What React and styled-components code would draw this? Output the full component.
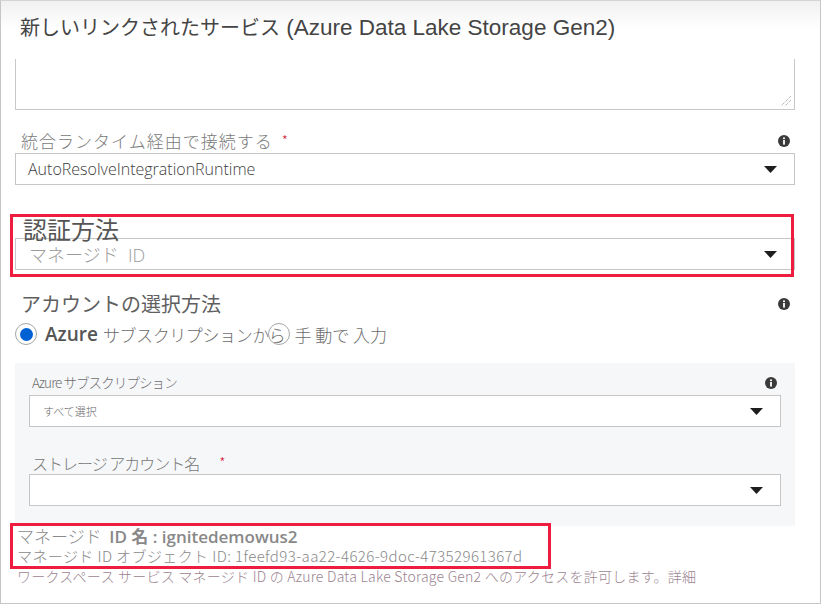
import React from "react";
import styled, { createGlobalStyle } from "styled-components";

const GlobalStyle = createGlobalStyle`
  html, body {
    margin: 0;
    padding: 0;
    background: #fff;
  }
  body {
    font-family: "Segoe UI", "Open Sans", "Noto Sans CJK JP", sans-serif;
  }
`;

const jp = `"Noto Sans CJK JP", "Open Sans", sans-serif`;

const Frame = styled.div`
  position: relative;
  box-sizing: border-box;
  width: 821px;
  height: 604px;
  border: 1px solid #c6c6c6;
  border-top-color: #d4d4d4;
  background: linear-gradient(#f1f1f1, #ffffff 28px);
  overflow: hidden;
`;

const Content = styled.div`
  padding: 0 25px 0 14px;
`;

const Title = styled.h1`
  margin: 0;
  padding: 6px 0 0 5px;
  height: 58px;
  box-sizing: border-box;
  font-weight: 400;
  line-height: 32px;
  color: #444;
  white-space: nowrap;
`;

const TitleJp = styled.span`
  font-family: ${jp};
  font-size: 20px;
`;

const TitleEn = styled.span`
  font-family: "Liberation Sans", Arial, sans-serif;
  font-size: 22.5px;
`;

const TextArea = styled.div`
  position: relative;
  box-sizing: border-box;
  height: 51px;
  border: 1px solid #c8c8c8;
  border-top: none;
  background: #fff;
`;

const Grip = styled.svg`
  position: absolute;
  right: 2px;
  bottom: 2px;
`;

const LabelRow = styled.div`
  display: flex;
  align-items: center;
  justify-content: space-between;
  height: ${(p) => p.h || 26}px;
  margin-top: ${(p) => p.mt || 0}px;
  padding: 0 ${(p) => p.pr || 5}px 0 ${(p) => p.pl || 5}px;
`;

const Label = styled.span`
  font-family: ${jp};
  font-size: ${(p) => p.size || 16}px;
  font-weight: ${(p) => p.weight || 300};
  color: ${(p) => p.color || "#7a7a7a"};
  letter-spacing: ${(p) => p.ls || 0}px;
  line-height: 1;
  white-space: nowrap;
`;

const Star = styled.span`
  color: #d6203a;
  margin-left: ${(p) => p.ml || 12}px;
  font-size: 14px;
  letter-spacing: 0;
  position: relative;
  top: -2px;
`;

const Select = styled.div`
  box-sizing: border-box;
  display: flex;
  align-items: center;
  justify-content: space-between;
  height: ${(p) => p.h || 32}px;
  padding: 0 17px 0 ${(p) => p.pl || 12}px;
  border: 1px solid #c6c6c6;
  background: #fff;
`;

const Value = styled.span`
  font-family: "Segoe UI", "Open Sans", ${jp};
  font-size: ${(p) => p.size || 14}px;
  font-weight: 300;
  color: ${(p) => p.color || "#404040"};
  letter-spacing: ${(p) => p.ls || 0}px;
  white-space: nowrap;
`;

const RadioRow = styled.div`
  display: flex;
  align-items: center;
  height: 22px;
  margin-top: 4px;
  font-family: ${jp};
  font-size: 17px;
  color: #6c6c6c;
  font-weight: 300;
  white-space: nowrap;
`;

const Radio = styled.span`
  box-sizing: border-box;
  display: inline-flex;
  align-items: center;
  justify-content: center;
  flex: none;
  width: 22px;
  height: 22px;
  border-radius: 50%;
  border: 1px solid #a6a6a6;
  background: ${(p) => (p.on ? "#fff" : "transparent")};
  margin: 0 ${(p) => p.mr || 0}px 0 ${(p) => p.ml || 0}px;

  &::after {
    content: "";
    display: ${(p) => (p.on ? "block" : "none")};
    width: 13px;
    height: 13px;
    border-radius: 50%;
    background: #0061d5;
  }
`;

const Bold = styled.span`
  font-family: "Open Sans", "Noto Sans", sans-serif;
  font-size: 19px;
  font-weight: 600;
  color: #555;
  margin-right: 5px;
`;

const Spaced = styled.span`
  letter-spacing: ${(p) => p.ls || 0}px;
`;

const Panel = styled.div`
  margin-top: 18px;
  padding: 8px 14px 20px 14px;
  background: #f6f7f9;
`;

const Info = () => (
  <svg width="12" height="12" viewBox="0 0 12 12">
    <circle cx="6" cy="6" r="6" fill="#3a3a3a" />
    <rect x="5.1" y="5" width="1.8" height="4.6" fill="#fff" />
    <circle cx="6" cy="3.2" r="1.05" fill="#fff" />
  </svg>
);

const Caret = () => (
  <svg width="13" height="7" viewBox="0 0 13 7">
    <polygon points="0,0 13,0 6.5,7" fill="#1e1e1e" />
  </svg>
);

const Notes = styled.div`
  padding: 0 0 0 2px;
  font-family: ${jp};
  font-weight: 300;
  white-space: nowrap;
`;

const NoteLine = styled.div`
  font-size: ${(p) => p.size || 14}px;
  line-height: ${(p) => p.lh || 18}px;
  color: ${(p) => p.color || "#8a8a8a"};
  letter-spacing: ${(p) => p.ls || 0}px;
`;

const Strong = styled.span`
  font-family: "Open Sans", "Noto Sans", ${jp};
  font-weight: 600;
  color: #888;
`;

const Callout = styled.div`
  position: absolute;
  box-sizing: border-box;
  left: ${(p) => p.x}px;
  top: ${(p) => p.y}px;
  width: ${(p) => p.w}px;
  height: ${(p) => p.h}px;
  border: 3px solid #ee1d3f;
  pointer-events: none;
`;

export default function App() {
  return (
    <>
      <GlobalStyle />
      <Frame>
        <Content>
          <Title>
            <TitleJp>新しいリンクされたサービス</TitleJp>
            <TitleEn> (Azure Data Lake Storage Gen2)</TitleEn>
          </Title>
          <TextArea>
            <Grip width="12" height="12" viewBox="0 0 12 12">
              <line x1="11" y1="1" x2="1" y2="11" stroke="#777" strokeWidth="0.8" strokeDasharray="1 1" />
              <line x1="11" y1="5" x2="5" y2="11" stroke="#777" strokeWidth="0.8" strokeDasharray="1 1" />
            </Grip>
          </TextArea>

          <LabelRow mt={18} h={25} pr={5} pl={6}>
            <Label size={17} ls={1}>
              統合ランタイム経由で接続する<Star ml={9}>*</Star>
            </Label>
            <Info />
          </LabelRow>
          <Select>
            <Value size={16}>AutoResolveIntegrationRuntime</Value>
            <Caret />
          </Select>

          <LabelRow mt={34} h={19} pl={8}>
            <Label size={24} weight={400} color="#555">
              認証方法
            </Label>
          </LabelRow>
          <Select h={32} pl={13}>
            <Value size={18} color="#9b9b9b">
              マネージド&nbsp; ID
            </Value>
            <Caret />
          </Select>

          <LabelRow mt={19} h={30} pl={6}>
            <Label size={20} weight={400} color="#5f5f5f">
              アカウントの選択方法
            </Label>
            <Info />
          </LabelRow>
          <RadioRow>
            <Radio on mr={8} />
            <Bold>Azure</Bold>
            <Spaced ls={-0.4}>サブスクリプションから</Spaced>
            <Radio ml={-17} mr={4} />
            手&nbsp;動で&nbsp;入力
          </RadioRow>

          <Panel>
            <LabelRow h={24} pl={3} pr={4}>
              <Label size={13.5} ls={-0.9} color="#6e6e6e">
                Azure サブスクリプション
              </Label>
              <Info />
            </LabelRow>
            <Select h={32} pl={13}>
              <Value size={11} color="#6a6a6a">
                すべて選択
              </Value>
              <Caret />
            </Select>
            <LabelRow mt={25} h={22} pl={3}>
              <Label size={16} ls={-1} color="#777">
                ストレージ アカウント名<Star ml={20}>*</Star>
              </Label>
            </LabelRow>
            <Select h={32}>
              <span />
              <Caret />
            </Select>
          </Panel>

          <Notes>
            <NoteLine size={17} lh={20}>
              マネージド&nbsp; <Strong>ID 名 : ignitedemowus2</Strong>
            </NoteLine>
            <NoteLine size={15} lh={18} ls={0.4}>
              マネージド ID オブジェクト ID: 1feefd93-aa22-4626-9doc-47352961367d
            </NoteLine>
            <NoteLine size={14} lh={22} ls={0.25} color="#9a8490">
              ワークスペース サービス マネージド ID の Azure Data Lake Storage Gen2 へのアクセスを許可します。詳細
            </NoteLine>
          </Notes>
        </Content>

        <Callout x={9} y={213} w={784} h={63} />
        <Callout x={9} y={522} w={541} h={46} />
      </Frame>
    </>
  );
}
